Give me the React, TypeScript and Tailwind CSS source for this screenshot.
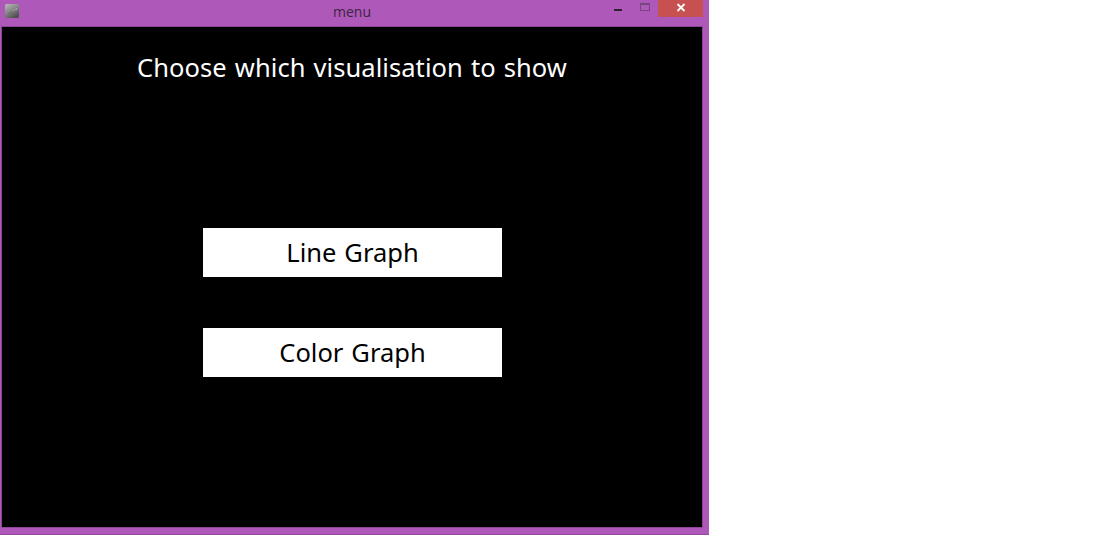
import type { ReactNode } from 'react';

function AppIcon() {
  return (
    <svg width="14" height="14" viewBox="0 0 14 14" aria-hidden="true">
      <defs>
        <linearGradient id="tile" x1="0" y1="0" x2="0.6" y2="1">
          <stop offset="0" stopColor="#bcbcbc" />
          <stop offset="0.5" stopColor="#8a8a8a" />
          <stop offset="1" stopColor="#505050" />
        </linearGradient>
      </defs>
      <rect width="14" height="14" rx="1.5" fill="url(#tile)" />
      <path d="M10 5h2v1h-2zM11 4h1v1h-1zM8 6h1v1h-1z" fill="#a8a8a8" />
      <path d="M3 9h1v1h-1zM6 8h1v2h-1zM8 8h1v1h-1z" fill="#6a6a6a" />
    </svg>
  );
}

function TitleBar() {
  return (
    <header className="flex h-[26px] w-full items-start">
      <div className="w-[333px] pt-1 pl-[5px]">
        <AppIcon />
      </div>
      <h1 className="w-[276px] pt-px font-['Open_Sans',sans-serif] text-[14px] leading-[22px] text-[#3a2540]">
        menu
      </h1>
      <button aria-label="Minimize" className="h-[17px] w-[22px] pl-[5px]">
        <svg width="17" height="17" shapeRendering="crispEdges">
          <path d="M0 9h8v2h-8z" fill="#2a222c" />
        </svg>
      </button>
      <button aria-label="Maximize" className="h-[17px] w-[27px] pl-[9px]">
        <svg width="18" height="17" shapeRendering="crispEdges">
          <path fillRule="evenodd" d="M0 3h10v8h-10zM1 5v5h8v-5z" fill="#76447e" />
        </svg>
      </button>
      <button aria-label="Close" className="h-[17px] w-[45px] bg-[#c75050]">
        <svg width="45" height="17">
          <path d="M19.5 4l7 7M26.5 4l-7 7" stroke="#fff" strokeWidth="1.8" />
        </svg>
      </button>
    </header>
  );
}

function MenuButton({ children }: { children: ReactNode }) {
  return (
    <button className="h-[49px] w-[299px] bg-white pb-px pl-px text-[25.5px] leading-[48px] [word-spacing:1.3px] whitespace-nowrap text-black">
      {children}
    </button>
  );
}

export default function App() {
  return (
    <div className="h-[537px] w-full overflow-hidden bg-white font-['Noto_Sans',sans-serif]">
      <div className="h-[535px] w-[709px] border-b border-[#95489f] bg-[#ae59b9]">
        <TitleBar />
        <main className="ml-px flex h-[502px] w-[702px] flex-col items-center border border-[#8f4598] bg-black">
          <h2 className="mt-[22px] h-9 text-[25.5px] leading-9 tracking-[0.06px] [word-spacing:1.4px] whitespace-nowrap text-white">
            Choose which visualisation to show
          </h2>
          <div className="mt-[143px] flex flex-col gap-[51px]">
            <MenuButton>Line Graph</MenuButton>
            <MenuButton>Color Graph</MenuButton>
          </div>
        </main>
      </div>
    </div>
  );
}
